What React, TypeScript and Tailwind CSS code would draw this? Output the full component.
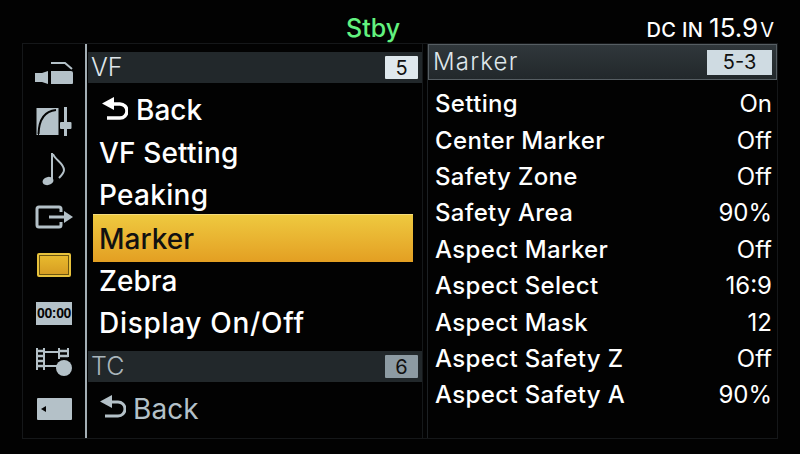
const FONT = "font-['Inter','Liberation_Sans',sans-serif]"

const ICON = "#b4c1c8"

const RIGHT_ROWS = [
  ["Setting", "On"],
  ["Center Marker", "Off"],
  ["Safety Zone", "Off"],
  ["Safety Area", "90%"],
  ["Aspect Marker", "Off"],
  ["Aspect Select", "16:9"],
  ["Aspect Mask", "12"],
  ["Aspect Safety Z", "Off"],
  ["Aspect Safety A", "90%"],
]

function CameraIcon() {
  return (
    <svg width="38" height="24" viewBox="0 0 38 24">
      <path d="M0 12h7l6-2v13l-6-2H0z" fill={ICON} />
      <path d="M16 10h20a2 2 0 0 1 2 2v10a1 1 0 0 1-1 1H16z" fill={ICON} />
      <path d="M16 2h14l7 6" fill="none" stroke={ICON} strokeWidth="2" />
    </svg>
  )
}

function CurveIcon() {
  return (
    <svg width="36" height="29" viewBox="0 0 36 29">
      <rect x="0.5" y="1" width="22" height="27" fill={ICON} />
      <path d="M2.5 27C3 12 9 4 20 3" fill="none" stroke="#050505" strokeWidth="2" />
      <path d="M2 27H3" stroke="#050505" strokeWidth="2" />
      <path d="M29.5 0v29" stroke={ICON} strokeWidth="3" />
      <rect x="24" y="15" width="11.5" height="7" rx="1" fill={ICON} />
    </svg>
  )
}

function NoteIcon() {
  return (
    <svg width="24" height="35" viewBox="0 0 24 35">
      <path d="M10 1v28" stroke={ICON} strokeWidth="2" />
      <path d="M11 2c2 6 11 9 11 16c0 3-2 5-5 8" fill="none" stroke={ICON} strokeWidth="2" />
      <ellipse cx="6" cy="29" rx="5.5" ry="4" fill={ICON} transform="rotate(-15 6 29)" />
    </svg>
  )
}

function OutputIcon() {
  return (
    <svg width="38" height="24" viewBox="0 0 38 24">
      <path d="M26 7V4a2 2 0 0 0-2-2H4a2 2 0 0 0-2 2v16a2 2 0 0 0 2 2h20a2 2 0 0 0 2-2v-3" fill="none" stroke={ICON} strokeWidth="3" />
      <path d="M14 12h16" stroke={ICON} strokeWidth="3" />
      <path d="M29 6l9 6l-9 6z" fill={ICON} />
    </svg>
  )
}

function FilmIcon() {
  return (
    <svg width="38" height="29" viewBox="0 0 38 29">
      <path d="M2 1v22M9 1v22M24 1v11M33 1v9" stroke={ICON} strokeWidth="2" />
      <path d="M2 4h7M2 9h7M2 14h7M2 19h7M24 4h9M24 9h9" stroke={ICON} strokeWidth="2.5" />
      <path d="M9 5h15M9 19h13" stroke={ICON} strokeWidth="2" />
      <circle cx="29" cy="21" r="8" fill={ICON} />
    </svg>
  )
}

function BackIcon({ color, width }: { color: string; width: number }) {
  return (
    <svg className="mt-[-3px]" width="26" height="24" viewBox="0 0 26 24">
      <path d="M12 7h6a7 7 0 0 1 0 14H5" fill="none" stroke={color} strokeWidth={width} />
      <path d="M0 6.5L12 0v13z" fill={color} />
    </svg>
  )
}

function SectionBar({ title, badge, dim }: { title: string; badge: string; dim?: boolean }) {
  return (
    <div className="flex h-[31px] items-center justify-between bg-[#22282b] pr-[4px]">
      <span className={`pl-[3px] text-[25px] font-light ${dim ? "text-[#aab6bc]" : "text-[#dfe6ea]"}`}>{title}</span>
      <span
        className={`flex h-[23px] w-[33px] items-center justify-center rounded-[1px] text-[20px] leading-none text-[#111] ${dim ? "bg-[#8d9ba3]" : "bg-[#dfe8ed]"}`}
      >
        {badge}
      </span>
    </div>
  )
}

function IconSlot({ children }: { children: React.ReactNode }) {
  return <div className="flex h-[48px] items-center justify-center">{children}</div>
}

export default function App() {
  return (
    <div className={`flex h-[454px] w-[800px] flex-col overflow-hidden bg-[#020202] ${FONT}`}>
      {/* Status line */}
      <div className="relative flex h-[43px] shrink-0 items-baseline justify-end pr-[26px] pt-[13px] text-white">
        <span className="absolute left-[346px] top-[14px] text-[25px] font-medium leading-7 text-[#62f27f]">Stby</span>
        <span className="text-[20px] font-medium tracking-[0.3px]">DC IN</span>
        <span className="ml-[6px] text-[26px] font-normal leading-[30px]">15.9</span>
        <span className="ml-[2px] text-[20px]">V</span>
      </div>

      <div className="mx-[22px] flex h-[396px] border border-[#151719]">
        {/* Category icons */}
        <div className="flex w-[64px] shrink-0 flex-col border-r-2 border-[#a3aeb4] pt-[5px]">
          <IconSlot><CameraIcon /></IconSlot>
          <IconSlot><CurveIcon /></IconSlot>
          <IconSlot><NoteIcon /></IconSlot>
          <IconSlot><OutputIcon /></IconSlot>
          <IconSlot>
            <div className="h-[24px] w-[34px] rounded-[2px] border-2 border-[#e8c23c] bg-gradient-to-b from-[#e9bb2e] to-[#d69c22] outline outline-1 outline-offset-[-3px] outline-[#6b5510]" />
          </IconSlot>
          <IconSlot>
            <div className="flex h-[23px] w-[36px] items-center justify-center bg-[#b4c1c8] font-['Liberation_Sans',sans-serif] text-[14px] font-bold leading-none tracking-[-0.4px] text-[#050505]">
              00:00
            </div>
          </IconSlot>
          <IconSlot><FilmIcon /></IconSlot>
          <IconSlot>
            <div className="flex h-[22px] w-[35px] items-center rounded-[1px] bg-[#b4c1c8] pl-[4px]">
              <div className="h-0 w-0 border-y-[3px] border-r-[5px] border-y-transparent border-r-[#050505]" />
            </div>
          </IconSlot>
        </div>

        {/* VF / TC menu */}
        <div className="ml-[1px] flex w-[335px] shrink-0 flex-col border-r border-[#15181a] pt-[8px]">
          <SectionBar title="VF" badge="5" />
          <div className="mt-[6px] flex h-[42px] items-center gap-[8px] pl-[14px] text-[28px] font-medium text-white">
            <BackIcon color="#ffffff" width={3.5} />
            Back
          </div>
          <div className="flex h-[43px] items-center pl-[11px] text-[28px] font-medium tracking-[0.15px] text-white">VF Setting</div>
          <div className="flex h-[40px] items-center pl-[11px] pt-[2px] text-[28px] font-medium tracking-[0.3px] text-white">Peaking</div>
          <div className="ml-[5px] flex h-[48px] w-[320px] shrink-0 items-center border-t border-[#f5dc7c] bg-gradient-to-b from-[#eec93f] to-[#e39f22] pl-[6px] text-[28px] font-medium text-[#111]">
            Marker
          </div>
          <div className="flex h-[38px] items-center pl-[11px] text-[28px] font-medium text-white">Zebra</div>
          <div className="flex h-[46px] items-center pl-[11px] text-[28px] font-medium tracking-[0.7px] text-white">Display On/Off</div>
          <div className="mt-[5px]">
            <SectionBar title="TC" badge="6" dim />
          </div>
          <div className="mt-[5px] flex h-[43px] items-center gap-[7px] pl-[12px] text-[28px] font-normal tracking-[0.1px] text-[#b4c1c8]">
            <BackIcon color="#b4c1c8" width={3} />
            Back
          </div>
        </div>

        {/* Marker detail */}
        <div className="ml-[4px] flex min-w-0 flex-1 flex-col border-l border-[#1c2023]">
          <div className="flex h-[36px] shrink-0 items-center justify-between border border-[#565e63] bg-gradient-to-b from-[#30373b] to-[#22282b] px-[4px]">
            <span className="text-[24px] font-light tracking-[1.2px] text-[#dfe6ea]">Marker</span>
            <span className="flex h-[25px] w-[65px] items-center justify-center bg-[#cfdbe2] text-[20px] leading-none text-[#111]">5-3</span>
          </div>
          <div className="mt-[6px] flex flex-col pl-[7px] pr-[5px]">
            {RIGHT_ROWS.map(([label, value]) => (
              <div key={label} className="flex h-[36.4px] items-center justify-between text-[24px] text-white">
                <span className="font-medium tracking-[0.35px]">{label}</span>
                <span className="font-normal">{value}</span>
              </div>
            ))}
          </div>
        </div>
      </div>
    </div>
  )
}
